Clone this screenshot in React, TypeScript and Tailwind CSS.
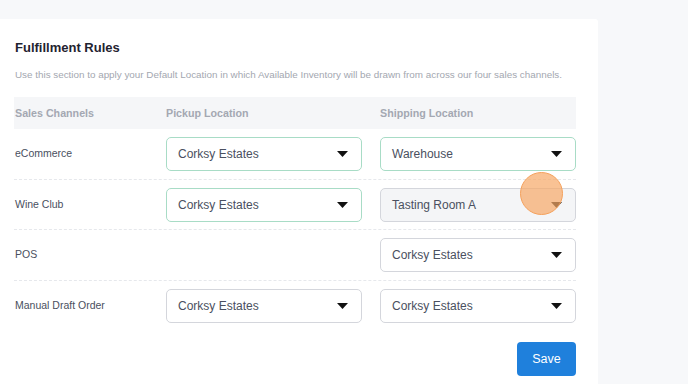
import React from "react";

type Sel = { label: string; variant: "green" | "gray" | "disabled" };

const rows: { name: string; pickup: Sel | null; shipping: Sel }[] = [
  { name: "eCommerce", pickup: { label: "Corksy Estates", variant: "green" }, shipping: { label: "Warehouse", variant: "green" } },
  { name: "Wine Club", pickup: { label: "Corksy Estates", variant: "green" }, shipping: { label: "Tasting Room A", variant: "disabled" } },
  { name: "POS", pickup: null, shipping: { label: "Corksy Estates", variant: "gray" } },
  { name: "Manual Draft Order", pickup: { label: "Corksy Estates", variant: "gray" }, shipping: { label: "Corksy Estates", variant: "gray" } },
];

function Select({ s }: { s: Sel }) {
  const cls =
    s.variant === "green"
      ? "border-[#a8dcc6] bg-white"
      : s.variant === "disabled"
      ? "border-[#d4d6dc] bg-[#f4f5f7]"
      : "border-[#d4d6dc] bg-white";
  return (
    <div className={`flex h-[34px] w-[196px] items-center justify-between rounded-[5px] border pl-[11px] pr-[13px] ${cls}`}>
      <span className="text-[12px] text-[#4a5060]">{s.label}</span>
      <svg width="11" height="6" viewBox="0 0 11 6">
        <path d="M0 0 L11 0 L5.5 6 Z" fill="#111" />
      </svg>
    </div>
  );
}

export default function App() {
  return (
    <div className="flex h-[384px] w-[688px] flex-col bg-[#f7f8fa]" style={{ fontFamily: '"Liberation Sans", Arial, sans-serif' }}>
      <div className="h-[19px] shrink-0" />
      <div className="flex flex-1">
        <div className="relative w-[598px] flex-none rounded-tr-[3px] bg-white pl-[15px] pr-[22px] pt-[20px]">
          <h2 className="text-[13px] font-bold leading-[18px] text-[#1f2330]">Fulfillment Rules</h2>
          <p className="mt-[12px] text-[9.85px] leading-[12px] text-[#a3a7b0]">
            Use this section to apply your Default Location in which Available Inventory will be drawn from across our four sales channels.
          </p>
          <div className="-ml-px mt-[16px] flex h-[32px] w-[562px] items-center bg-[#f5f6f8] text-[10.7px] font-bold text-[#a4a8b2]">
            <div className="w-[152px] pl-px">Sales Channels</div>
            <div className="w-[214px]">Pickup Location</div>
            <div>Shipping Location</div>
          </div>
          {rows.map((r, i) => (
            <div
              key={r.name}
              className={`-ml-px flex h-[50.5px] w-[562px] items-center pt-px ${i < rows.length - 1 ? "border-b border-dashed border-[#e6e8ec]" : ""}`}
            >
              <div className="w-[152px] pl-px text-[10.5px] text-[#4a5060]">{r.name}</div>
              <div className="w-[214px]">{r.pickup && <Select s={r.pickup} />}</div>
              <div>
                <Select s={r.shipping} />
              </div>
            </div>
          ))}
          <div className="mt-[11px] flex w-[561px] justify-end">
            <button className="h-[34px] w-[59px] rounded-[4px] bg-[#1f80dc] text-[12.5px] text-white">Save</button>
          </div>
          <div className="absolute left-[520px] top-[153px] h-[43px] w-[43px] rounded-full border-[1.5px] border-[#f5a15c] bg-[#f7a866]/70" />
        </div>
      </div>
    </div>
  );
}
